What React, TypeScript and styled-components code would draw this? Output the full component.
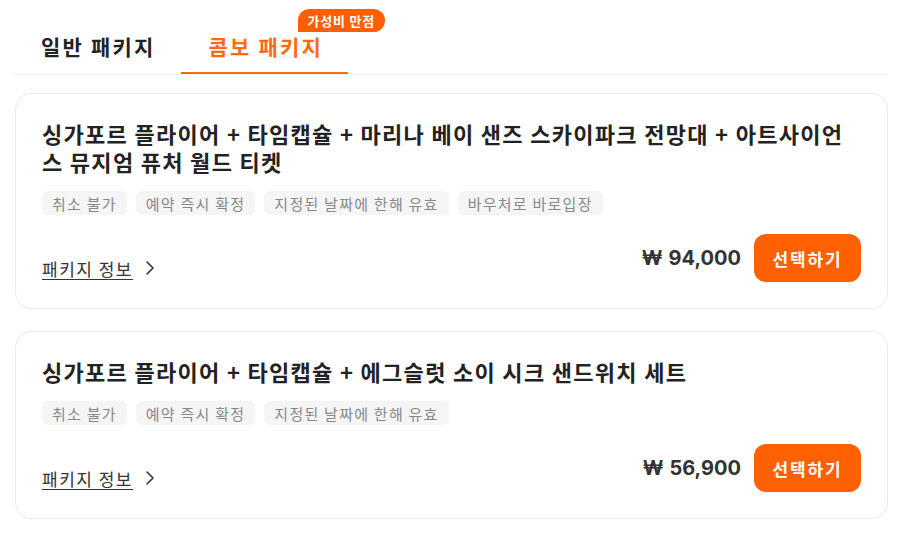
import React from "react";
import styled, { createGlobalStyle } from "styled-components";

const Global = createGlobalStyle`
  html, body { margin: 0; padding: 0; background: #fff; }
  body { font-family: "Noto Sans CJK KR", "Noto Sans", sans-serif; color: #222; }
  * { box-sizing: border-box; }
`;

const Page = styled.div`
  padding: 0 12px 0 15px;
  display: flex;
  flex-direction: column;
`;

const TabList = styled.div`
  display: flex;
  margin-left: -2px;
  border-bottom: 1px solid #f0f0f0;
  margin-bottom: 18px;
`;

const Tab = styled.div<{ $active?: boolean }>`
  position: relative;
  padding: 32px 25px 12px 28px;
  font-size: 21px;
  line-height: 28px;
  letter-spacing: 2.2px;
  font-weight: 700;
  white-space: nowrap;
  color: ${(p) => (p.$active ? "#ff6a13" : "#222")};
  border-bottom: 2px solid ${(p) => (p.$active ? "#ff6a13" : "transparent")};
`;

const Badge = styled.span`
  position: absolute;
  top: 9px;
  left: 117px;
  height: 23px;
  padding: 0 10px;
  display: flex;
  align-items: center;
  white-space: nowrap;
  background: #ff5f00;
  color: #fff;
  font-size: 13px;
  letter-spacing: 0.8px;
  font-weight: 700;
  border-radius: 12px 12px 12px 0;
`;

const CardList = styled.div`
  display: flex;
  flex-direction: column;
  gap: 22px;
`;

const Card = styled.div`
  border: 1px solid #ebebeb;
  border-radius: 16px;
  padding: 25px 26px 26px 26px;
  display: flex;
  flex-direction: column;
  background: #fff;
`;

const Title = styled.h2`
  margin: 0;
  font-size: 22px;
  line-height: 28px;
  letter-spacing: 1.3px;
  font-weight: 700;
  color: #222;
`;

const Tags = styled.div`
  display: flex;
  flex-wrap: wrap;
  gap: 9px;
  margin-top: 16px;
`;

const Tag = styled.span`
  height: 24px;
  padding: 0 10px;
  display: flex;
  align-items: center;
  background: #f5f5f5;
  border-radius: 6px;
  color: #888;
  font-size: 15px;
  letter-spacing: 1.25px;
`;

const Footer = styled.div`
  display: flex;
  align-items: center;
  justify-content: space-between;
  margin-top: 19px;
`;

const InfoLink = styled.a`
  display: flex;
  align-items: center;
  gap: 11px;
  color: #333;
  font-size: 17px;
  letter-spacing: 1.5px;
  text-decoration: none;
  margin-top: 20px;
  span {
    text-decoration: underline;
    text-underline-offset: 3px;
    text-decoration-thickness: 1px;
  }
`;

const PriceGroup = styled.div`
  display: flex;
  align-items: center;
  gap: 13px;
`;

const Price = styled.span`
  font-family: "Inter", "Noto Sans CJK KR", sans-serif;
  font-size: 20px;
  font-weight: 700;
  color: #333;
`;

const Won = styled.span`
  margin-right: 6px;
`;

const SelectButton = styled.button`
  width: 107px;
  height: 48px;
  border: none;
  border-radius: 12px;
  background: #ff6000;
  color: #fff;
  font-family: "Noto Sans CJK KR", sans-serif;
  font-size: 17px;
  letter-spacing: 1.8px;
  font-weight: 700;
  cursor: pointer;
`;

const Chevron = () => (
  <svg width="12" height="16" viewBox="0 0 12 16" fill="none">
    <polyline points="3,2 9,8 3,14" stroke="#333" strokeWidth="1.6" strokeLinecap="round" strokeLinejoin="round" />
  </svg>
);

type Pkg = { title: string; tags: string[]; price: string };

const packages: Pkg[] = [
  {
    title:
      "싱가포르 플라이어 + 타임캡슐 + 마리나 베이 샌즈 스카이파크 전망대 + 아트사이언스 뮤지엄 퓨처 월드 티켓",
    tags: ["취소 불가", "예약 즉시 확정", "지정된 날짜에 한해 유효", "바우처로 바로입장"],
    price: "94,000",
  },
  {
    title: "싱가포르 플라이어 + 타임캡슐 + 에그슬럿 소이 시크 샌드위치 세트",
    tags: ["취소 불가", "예약 즉시 확정", "지정된 날짜에 한해 유효"],
    price: "56,900",
  },
];

export default function App() {
  return (
    <>
      <Global />
      <Page>
        <TabList>
          <Tab>일반 패키지</Tab>
          <Tab $active>
            콤보 패키지
            <Badge>가성비 만점</Badge>
          </Tab>
        </TabList>
        <CardList>
          {packages.map((p) => (
            <Card key={p.price}>
              <Title>{p.title}</Title>
              <Tags>
                {p.tags.map((t) => (
                  <Tag key={t}>{t}</Tag>
                ))}
              </Tags>
              <Footer>
                <InfoLink>
                  <span>패키지 정보</span>
                  <Chevron />
                </InfoLink>
                <PriceGroup>
                  <Price>
                    <Won>₩</Won>
                    {p.price}
                  </Price>
                  <SelectButton>선택하기</SelectButton>
                </PriceGroup>
              </Footer>
            </Card>
          ))}
        </CardList>
      </Page>
    </>
  );
}
